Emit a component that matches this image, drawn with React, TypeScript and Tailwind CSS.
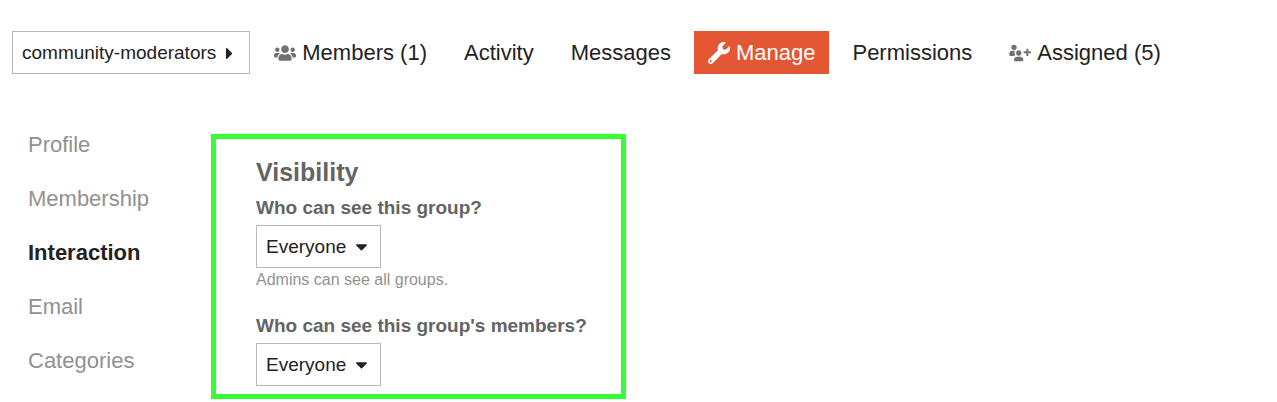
import React from "react";
import { FaCaretDown, FaCaretRight, FaUsers, FaWrench } from "react-icons/fa";

function GroupPlusIcon({ className }: { className?: string }) {
  return (
    <svg viewBox="0 0 66 52" fill="currentColor" className={className} aria-hidden="true">
      <circle cx="15" cy="9" r="8" />
      <path d="M9 19h8a14 14 0 0 0 2 13c-2 1-3 2-4 3H4c-2 0-3-1-3-3v-4c0-5 3-9 8-9Z" />
      <circle cx="29" cy="26" r="8" />
      <path d="M24 37h10c5 0 9 4 9 9v2c0 2-1 3-3 3H18c-2 0-3-1-3-3v-2c0-5 4-9 9-9Z" />
      <path d="M52 13h6v8h8v6h-8v8h-6v-8h-8v-6h8Z" />
    </svg>
  );
}

type Tab = { label: string; icon?: React.ReactNode; active?: boolean };

const tabs: Tab[] = [
  { label: "Members (1)", icon: <FaUsers className="h-[18px] w-[22px] text-[#717171]" /> },
  { label: "Activity" },
  { label: "Messages" },
  { label: "Manage", icon: <FaWrench className="size-[22px]" />, active: true },
  { label: "Permissions" },
  { label: "Assigned (5)", icon: <GroupPlusIcon className="h-[18px] w-[22px] text-[#717171]" /> },
];

const sections = ["Profile", "Membership", "Interaction", "Email", "Categories"];

function VisibilityField({ id, label, hint }: { id: string; label: string; hint?: string }) {
  return (
    <div>
      <label htmlFor={id} className="block text-[19px] leading-[26px] font-bold text-[#646464]">
        {label}
      </label>
      <div className="mt-1 grid w-[125px] items-center">
        <select
          id={id}
          className="col-start-1 row-start-1 h-[43px] w-full appearance-none border border-[#b9b9b9] bg-white px-[9px] pt-[2px] text-[19px] text-[#222222]"
        >
          <option>Everyone</option>
        </select>
        <FaCaretDown className="pointer-events-none col-start-1 row-start-1 mr-[10px] size-[19px] justify-self-end text-[#222222]" />
      </div>
      {hint && <p className="text-[16px] leading-6 text-[#919191]">{hint}</p>}
    </div>
  );
}

export default function App() {
  return (
    <div className="bg-white px-3 pt-[31px] pb-[3px] font-['Liberation_Sans',Arial,sans-serif] text-[#222222]">
      <header className="flex flex-wrap items-center gap-[10px]">
        <button
          type="button"
          className="flex h-[43px] items-center gap-1 border border-[#b9b9b9] px-[9px] pt-[2px] pr-[10px] text-[19px] whitespace-nowrap"
        >
          community-moderators
          <FaCaretRight className="size-[19px] shrink-0" />
        </button>
        <nav aria-label="Group">
          <ul className="flex flex-wrap gap-[9px]">
            {tabs.map((tab) => (
              <li key={tab.label}>
                <a
                  href="#"
                  aria-current={tab.active ? "page" : undefined}
                  className={`flex h-[43px] items-center gap-[6px] px-[14px] text-[22px] whitespace-nowrap ${
                    tab.active ? "bg-[#e45735] text-white" : ""
                  }`}
                >
                  {tab.icon}
                  {tab.label}
                </a>
              </li>
            ))}
          </ul>
        </nav>
      </header>

      <div className="mt-[43px] flex items-start">
        <nav aria-label="Manage" className="w-[199px] shrink-0">
          <ul>
            {sections.map((name) => (
              <li key={name}>
                <a
                  href="#"
                  className={`flex h-[54px] items-center px-4 text-[22px] ${
                    name === "Interaction" ? "font-bold" : "text-[#919191]"
                  }`}
                >
                  {name}
                </a>
              </li>
            ))}
          </ul>
        </nav>
        <main className="mt-[17px] w-full max-w-[415px] border-[5px] border-[#33ff33] pt-[17px] pr-6 pb-2 pl-10">
          <h1 className="text-[25px] leading-8 font-bold text-[#646464]">Visibility</h1>
          <div className="mt-[7px] flex flex-col gap-[21px]">
            <VisibilityField
              id="group-visibility"
              label="Who can see this group?"
              hint="Admins can see all groups."
            />
            <VisibilityField id="members-visibility" label="Who can see this group's members?" />
          </div>
        </main>
      </div>
    </div>
  );
}
